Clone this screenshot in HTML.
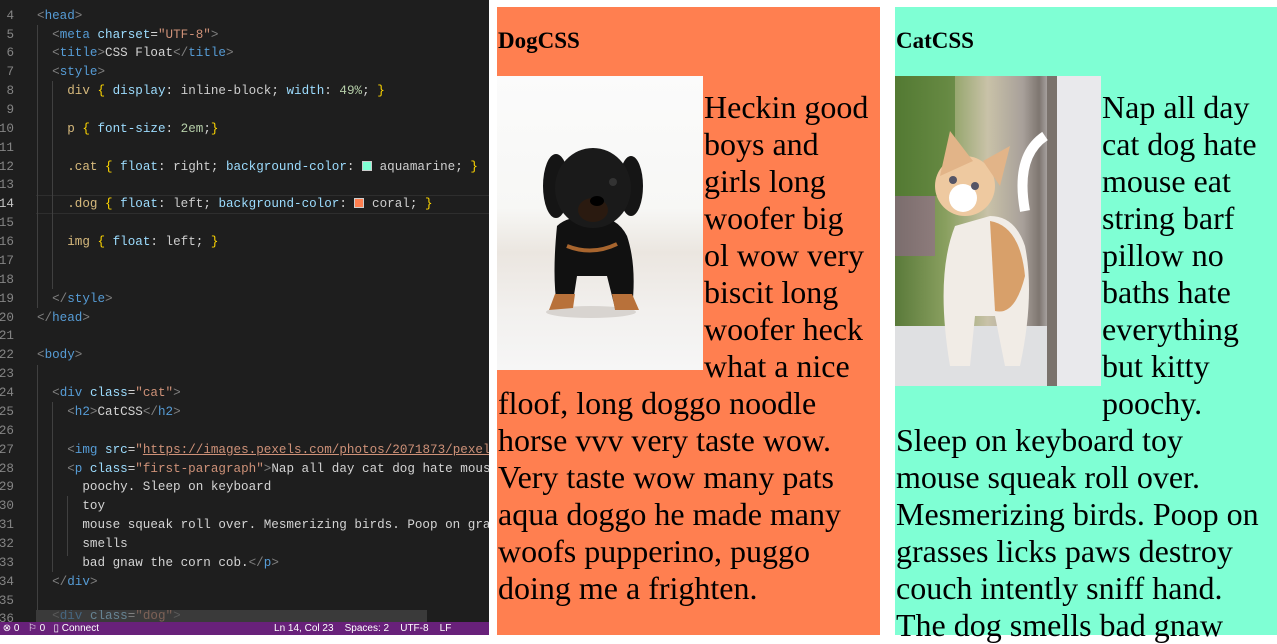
<!DOCTYPE html>
<html><head><meta charset="UTF-8"><style>
*{margin:0;padding:0;box-sizing:border-box}
body{width:1277px;height:635px;overflow:hidden;background:#fff;position:relative;font-family:"Liberation Serif",serif}
#ed{position:absolute;left:0;top:0;width:489px;height:635px;background:#1e1e1e;overflow:hidden;font-family:"Liberation Mono",monospace;font-size:12.6px;color:#d4d4d4}
.ln{position:absolute;left:-20px;width:34px;text-align:right;color:#858585;height:19px;line-height:19px}
.cd{position:absolute;left:37px;white-space:pre;height:19px;line-height:19px}
.t{color:#569cd6}.b{color:#808080}.a{color:#9cdcfe}.s{color:#ce9178}.sel{color:#d7ba7d}.y{color:#ffd700}.n{color:#b5cea8}.v{color:#cecece}
.g{position:absolute;width:1px;background:#404040}
#sb{position:absolute;left:0;top:622px;width:489px;height:13px;background:#68217a;color:#fff;font-family:"Liberation Sans",sans-serif;font-size:10px;line-height:13px;white-space:pre}
.p{position:absolute;font-size:32px;line-height:37px;white-space:nowrap;color:#000}
h2{position:absolute;font-size:23px;font-weight:bold}
</style></head><body>
<div id="ed">
<div style="position:absolute;left:36px;top:195px;width:453px;height:19px;border-top:1px solid #2e2e2e;border-bottom:1px solid #2e2e2e"></div>
<div class="g" style="left:37px;top:25px;height:283px"></div>
<div class="g" style="left:52px;top:81px;height:208px"></div>
<div class="g" style="left:37px;top:365px;height:250px"></div>
<div class="g" style="left:52px;top:402px;height:170px"></div>
<div class="g" style="left:67px;top:496px;height:60px"></div>

<div class="ln" style="top:7px">4</div><div class="cd" style="top:7px"><span class="b">&lt;</span><span class="t">head</span><span class="b">&gt;</span></div>
<div class="ln" style="top:26px">5</div><div class="cd" style="top:26px">  <span class="b">&lt;</span><span class="t">meta</span> <span class="a">charset</span>=<span class="s">"UTF-8"</span><span class="b">&gt;</span></div>
<div class="ln" style="top:44px">6</div><div class="cd" style="top:44px">  <span class="b">&lt;</span><span class="t">title</span><span class="b">&gt;</span>CSS Float<span class="b">&lt;/</span><span class="t">title</span><span class="b">&gt;</span></div>
<div class="ln" style="top:63px">7</div><div class="cd" style="top:63px">  <span class="b">&lt;</span><span class="t">style</span><span class="b">&gt;</span></div>
<div class="ln" style="top:82px">8</div><div class="cd" style="top:82px">    <span class="sel">div</span> <span class="y">{</span> <span class="a">display</span>: <span class="v">inline-block</span>; <span class="a">width</span>: <span class="n">49%</span>; <span class="y">}</span></div>
<div class="ln" style="top:101px">9</div>
<div class="ln" style="top:120px">10</div><div class="cd" style="top:120px">    <span class="sel">p</span> <span class="y">{</span> <span class="a">font-size</span>: <span class="n">2em</span>;<span class="y">}</span></div>
<div class="ln" style="top:139px">11</div>
<div class="ln" style="top:158px">12</div><div class="cd" style="top:158px">    <span class="sel">.cat</span> <span class="y">{</span> <span class="a">float</span>: <span class="v">right</span>; <span class="a">background-color</span>: <span style="display:inline-block;width:10px;height:10px;background:#7fffd4;vertical-align:-1px;border:1px solid #ccc"></span> <span class="v">aquamarine</span>; <span class="y">}</span></div>
<div class="ln" style="top:176px">13</div>
<div class="ln" style="top:195px;color:#c6c6c6">14</div><div class="cd" style="top:195px">    <span class="sel">.dog</span> <span class="y">{</span> <span class="a">float</span>: <span class="v">left</span>; <span class="a">background-color</span>: <span style="display:inline-block;width:10px;height:10px;background:#ff7f50;vertical-align:-1px;border:1px solid #ccc"></span> <span class="v">coral</span>; <span class="y">}</span></div>
<div class="ln" style="top:214px">15</div>
<div class="ln" style="top:233px">16</div><div class="cd" style="top:233px">    <span class="sel">img</span> <span class="y">{</span> <span class="a">float</span>: <span class="v">left</span>; <span class="y">}</span></div>
<div class="ln" style="top:252px">17</div>
<div class="ln" style="top:271px">18</div>
<div class="ln" style="top:290px">19</div><div class="cd" style="top:290px">  <span class="b">&lt;/</span><span class="t">style</span><span class="b">&gt;</span></div>
<div class="ln" style="top:309px">20</div><div class="cd" style="top:309px"><span class="b">&lt;/</span><span class="t">head</span><span class="b">&gt;</span></div>
<div class="ln" style="top:327px">21</div>
<div class="ln" style="top:346px">22</div><div class="cd" style="top:346px"><span class="b">&lt;</span><span class="t">body</span><span class="b">&gt;</span></div>
<div class="ln" style="top:365px">23</div>
<div class="ln" style="top:384px">24</div><div class="cd" style="top:384px">  <span class="b">&lt;</span><span class="t">div</span> <span class="a">class</span>=<span class="s">"cat"</span><span class="b">&gt;</span></div>
<div class="ln" style="top:403px">25</div><div class="cd" style="top:403px">    <span class="b">&lt;</span><span class="t">h2</span><span class="b">&gt;</span>CatCSS<span class="b">&lt;/</span><span class="t">h2</span><span class="b">&gt;</span></div>
<div class="ln" style="top:422px">26</div>
<div class="ln" style="top:441px">27</div><div class="cd" style="top:441px">    <span class="b">&lt;</span><span class="t">img</span> <span class="a">src</span>=<span class="s">"<u>https://images.pexels.com/photos/2071873/pexels</u></span></div>
<div class="ln" style="top:460px">28</div><div class="cd" style="top:460px">    <span class="b">&lt;</span><span class="t">p</span> <span class="a">class</span>=<span class="s">"first-paragraph"</span><span class="b">&gt;</span>Nap all day cat dog hate mouse</div>
<div class="ln" style="top:478px">29</div><div class="cd" style="top:478px">      poochy. Sleep on keyboard</div>
<div class="ln" style="top:497px">30</div><div class="cd" style="top:497px">      toy</div>
<div class="ln" style="top:516px">31</div><div class="cd" style="top:516px">      mouse squeak roll over. Mesmerizing birds. Poop on grass</div>
<div class="ln" style="top:535px">32</div><div class="cd" style="top:535px">      smells</div>
<div class="ln" style="top:554px">33</div><div class="cd" style="top:554px">      bad gnaw the corn cob.<span class="b">&lt;/</span><span class="t">p</span><span class="b">&gt;</span></div>
<div class="ln" style="top:573px">34</div><div class="cd" style="top:573px">  <span class="b">&lt;/</span><span class="t">div</span><span class="b">&gt;</span></div>
<div class="ln" style="top:592px">35</div>
<div class="ln" style="top:610px">36</div>
<div style="position:absolute;left:36px;top:610px;width:391px;height:12px;background:#3a3a3a;overflow:hidden"><div class="cd" style="left:1px;top:-3px;opacity:.45">  <span class="b">&lt;</span><span class="t">div</span> <span class="a">class</span>=<span class="s">"dog"</span><span class="b">&gt;</span></div></div>
<div id="sb"> ⊗ 0   ⚐ 0   ▯ Connect                                                               Ln 14, Col 23    Spaces: 2    UTF-8    LF</div>
</div>

<div style="position:absolute;left:497px;top:7px;width:383px;height:628px;background:#ff7f50"></div>
<div style="position:absolute;left:895px;top:7px;width:382px;height:628px;background:#7fffd4"></div>

<h2 style="left:498px;top:28px">DogCSS</h2>
<h2 style="left:896px;top:28px">CatCSS</h2>

<div style="position:absolute;left:497px;top:76px;width:206px;height:294px;background:linear-gradient(#fbfbfb 0%,#f7f7f5 45%,#ebe6e0 60%,#f2f0ee 80%,#f6f6f6 100%);overflow:hidden">
<svg width="206" height="294" viewBox="0 0 206 294">
<ellipse cx="94" cy="236" rx="45" ry="6" fill="#d8d4d0"/>
<path d="M60 150 Q55 200 60 230 L75 232 L80 200 L110 200 L118 232 L135 232 Q140 190 130 160 Q120 140 95 140 Q70 140 60 150Z" fill="#111"/>
<path d="M58 218 L78 218 L76 232 L52 234Z M115 218 L135 218 L142 234 L118 234Z" fill="#b8713a"/>
<path d="M70 170 Q95 180 120 168" stroke="#a8652e" stroke-width="4" fill="none"/>
<ellipse cx="59" cy="110" rx="13" ry="32" fill="#151515"/>
<ellipse cx="134" cy="110" rx="12" ry="30" fill="#151515"/>
<ellipse cx="96" cy="112" rx="38" ry="40" fill="#1a1a1a"/>
<ellipse cx="96" cy="134" rx="15" ry="12" fill="#2a1a10"/>
<ellipse cx="100" cy="125" rx="7" ry="5" fill="#000"/>
<circle cx="116" cy="106" r="4" fill="#333"/>
</svg></div>

<div style="position:absolute;left:895px;top:76px;width:206px;height:310px;background:linear-gradient(90deg,#5a7a3a 0%,#8aa060 25%,#c9c2a8 45%,#a8a09a 62%,#7e7670 70%,#e8e6ea 80%,#f4f4f4 88%,#999 100%);overflow:hidden">
<svg width="206" height="310" viewBox="0 0 206 310">
<rect x="0" y="0" width="60" height="120" fill="#4e7a2e" opacity=".6"/>
<rect x="0" y="120" width="40" height="60" fill="#9b5fa0" opacity=".5"/>
<rect x="0" y="250" width="206" height="60" fill="#dfe0e2"/>
<rect x="160" y="0" width="46" height="310" fill="#e9e9ec"/>
<rect x="152" y="0" width="10" height="310" fill="#7a726c"/>
<path d="M130 135 Q120 80 150 60" stroke="#fff" stroke-width="10" fill="none"/>
<path d="M60 150 Q40 200 55 290 L75 290 L80 240 L100 240 L110 290 L125 290 Q140 220 130 170 Q120 140 95 140Z" fill="#f1ece6"/>
<path d="M95 145 Q125 150 130 200 Q120 240 100 235 Z" fill="#d8a06a"/>
<ellipse cx="70" cy="110" rx="30" ry="30" fill="#eec9a0"/>
<path d="M45 100 L55 55 L78 85Z M88 85 L115 70 L105 110Z" fill="#e2b488"/>
<ellipse cx="68" cy="122" rx="14" ry="14" fill="#fff"/>
<circle cx="58" cy="104" r="4" fill="#556"/><circle cx="80" cy="110" r="4" fill="#556"/>
</svg></div>

<div class="p" style="left:704px;top:89px">Heckin good</div>
<div class="p" style="left:704px;top:126px">boys and</div>
<div class="p" style="left:704px;top:163px">girls long</div>
<div class="p" style="left:704px;top:200px">woofer big</div>
<div class="p" style="left:704px;top:237px">ol wow very</div>
<div class="p" style="left:704px;top:274px">biscit long</div>
<div class="p" style="left:704px;top:311px">woofer heck</div>
<div class="p" style="left:704px;top:348px">what a nice</div>
<div class="p" style="left:498px;top:385px">floof, long doggo noodle</div>
<div class="p" style="left:498px;top:422px">horse vvv very taste wow.</div>
<div class="p" style="left:498px;top:459px">Very taste wow many pats</div>
<div class="p" style="left:498px;top:496px">aqua doggo he made many</div>
<div class="p" style="left:498px;top:533px">woofs pupperino, puggo</div>
<div class="p" style="left:498px;top:570px">doing me a frighten.</div>

<div class="p" style="left:1102px;top:89px">Nap all day</div>
<div class="p" style="left:1102px;top:126px">cat dog hate</div>
<div class="p" style="left:1102px;top:163px">mouse eat</div>
<div class="p" style="left:1102px;top:200px">string barf</div>
<div class="p" style="left:1102px;top:237px">pillow no</div>
<div class="p" style="left:1102px;top:274px">baths hate</div>
<div class="p" style="left:1102px;top:311px">everything</div>
<div class="p" style="left:1102px;top:348px">but kitty</div>
<div class="p" style="left:1102px;top:385px">poochy.</div>
<div class="p" style="left:896px;top:422px">Sleep on keyboard toy</div>
<div class="p" style="left:896px;top:459px">mouse squeak roll over.</div>
<div class="p" style="left:896px;top:496px">Mesmerizing birds. Poop on</div>
<div class="p" style="left:896px;top:533px">grasses licks paws destroy</div>
<div class="p" style="left:896px;top:570px">couch intently sniff hand.</div>
<div class="p" style="left:896px;top:607px">The dog smells bad gnaw</div>
</body></html>
